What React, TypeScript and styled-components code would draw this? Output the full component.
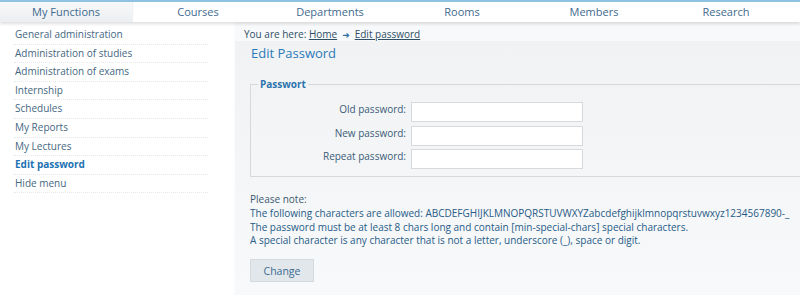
import styled, { createGlobalStyle } from "styled-components";

const GlobalStyle = createGlobalStyle`
  html, body {
    margin: 0;
    padding: 0;
    background: #ffffff;
    font-family: "Open Sans", "DejaVu Sans", sans-serif;
    overflow: hidden;
  }
`;

const tabs = ["My Functions", "Courses", "Departments", "Rooms", "Members", "Research"];

const menu = [
  "General administration",
  "Administration of studies",
  "Administration of exams",
  "Internship",
  "Schedules",
  "My Reports",
  "My Lectures",
  "Edit password",
  "Hide menu",
];

const fields = ["Old password:", "New password:", "Repeat password:"];

export default function App() {
  return (
    <>
      <GlobalStyle />
      <Page>
        <TopBar>
          {tabs.map((t, i) => (
            <Tab key={t} $active={i === 0}>
              {t}
            </Tab>
          ))}
        </TopBar>
        <Body>
          <Sidebar>
            {menu.map((m) => (
              <MenuItem key={m} $active={m === "Edit password"}>
                {m}
              </MenuItem>
            ))}
          </Sidebar>
          <Main>
            <Breadcrumb>
              You are here: <CrumbLink>Home</CrumbLink>
              <Arrow>➜</Arrow>
              <CrumbLink>Edit password</CrumbLink>
            </Breadcrumb>
            <Content>
              <Title>Edit Password</Title>
              <Fieldset>
                <Legend>Passwort</Legend>
                <FormGrid>
                  {fields.map((f) => (
                    <Row key={f}>
                      <Label>{f}</Label>
                      <Input type="password" />
                    </Row>
                  ))}
                </FormGrid>
              </Fieldset>
              <Note>
                <NoteLine $muted>Please note:</NoteLine>
                <NoteLine>
                  The following characters are allowed:
                  ABCDEFGHIJKLMNOPQRSTUVWXYZabcdefghijklmnopqrstuvwxyz1234567890-_
                </NoteLine>
                <NoteLine>
                  The password must be at least 8 chars long and contain
                  [min-special-chars] special characters.
                </NoteLine>
                <NoteLine>
                  A special character is any character that is not a letter,
                  underscore (_), space or digit.
                </NoteLine>
              </Note>
              <Button>Change</Button>
            </Content>
          </Main>
        </Body>
      </Page>
    </>
  );
}

const Page = styled.div`
  width: 800px;
  height: 295px;
  display: flex;
  flex-direction: column;
  overflow: hidden;
`;

const TopBar = styled.div`
  height: 20px;
  display: flex;
  border-top: 2px solid #8ec3e3;
  background: #ffffff;
  box-shadow: 0 2px 3px rgba(0, 0, 0, 0.13);
  position: relative;
  z-index: 2;
`;

const Tab = styled.div<{ $active?: boolean }>`
  width: 132px;
  text-align: center;
  font-size: 11px;
  line-height: 19px;
  color: #3f6a8e;
  background: ${(p) =>
    p.$active ? "linear-gradient(to bottom, #f7f8f9, #eceff2)" : "transparent"};
  box-shadow: ${(p) => (p.$active ? "1px 0 1px rgba(0,0,0,0.06)" : "none")};
`;

const Body = styled.div`
  flex: 1;
  display: flex;
`;

const Sidebar = styled.div`
  width: 235px;
  flex-shrink: 0;
  padding: 4px 0 0 14px;
  box-sizing: border-box;
`;

const MenuItem = styled.div<{ $active?: boolean }>`
  width: 193px;
  padding-left: 1px;
  font-size: 10px;
  line-height: 17.6px;
  border-bottom: 1px dotted #e6e8eb;
  color: ${(p) => (p.$active ? "#1c72b3" : "#45677f")};
  font-weight: ${(p) => (p.$active ? 700 : 400)};
`;

const Main = styled.div`
  flex: 1;
  display: flex;
  flex-direction: column;
  background: #f8f9fa;
  box-shadow: -1px 0 2px rgba(0, 0, 0, 0.02);
`;

const Breadcrumb = styled.div`
  padding: 5px 0 0 9px;
  height: 14px;
  font-size: 10px;
  line-height: 15px;
  color: #2f4f66;
`;

const CrumbLink = styled.span`
  text-decoration: underline;
  color: #2f4f66;
`;

const Arrow = styled.span`
  font-size: 9px;
  font-weight: 700;
  color: #2d6fa5;
  margin: 0 5px;
`;

const Content = styled.div`
  flex: 1;
  padding: 3px 0 0 15px;
  background: linear-gradient(to bottom, #f1f2f4, #f8f9fa);
`;

const Title = styled.h1`
  margin: 0 0 0 1px;
  font-size: 13px;
  font-weight: 400;
  line-height: 18px;
  color: #2a7ab9;
`;

const Fieldset = styled.fieldset`
  margin: 15px 0 0 0;
  width: 580px;
  padding: 11px 0 7px 7px;
  border: 1px solid #d6d9dc;
  box-sizing: border-box;
`;

const Legend = styled.legend`
  padding: 0 2px;
  font-size: 10px;
  font-weight: 700;
  color: #2c74ad;
`;

const FormGrid = styled.div`
  display: flex;
  flex-direction: column;
  gap: 3.5px;
`;

const Row = styled.div`
  display: grid;
  grid-template-columns: 148px 172px;
  column-gap: 5px;
  align-items: start;
`;

const Label = styled.label`
  text-align: right;
  font-size: 10px;
  line-height: 14px;
  color: #3b5c78;
`;

const Input = styled.input`
  height: 20px;
  box-sizing: border-box;
  border: 1px solid #d7dadd;
  background: #ffffff;
  margin: 0;
  padding: 0 3px;
`;

const Note = styled.div`
  margin-top: 16px;
`;

const NoteLine = styled.div<{ $muted?: boolean }>`
  font-size: 10px;
  line-height: 13.8px;
  color: ${(p) => (p.$muted ? "#3c5870" : "#265b87")};
`;

const Button = styled.button`
  margin-top: 11px;
  width: 64px;
  height: 23px;
  border: 1px solid #d5dade;
  background: #e2e7eb;
  font-family: "Open Sans", "DejaVu Sans", sans-serif;
  font-size: 10.5px;
  color: #3b6a90;
  padding: 0;
`;
